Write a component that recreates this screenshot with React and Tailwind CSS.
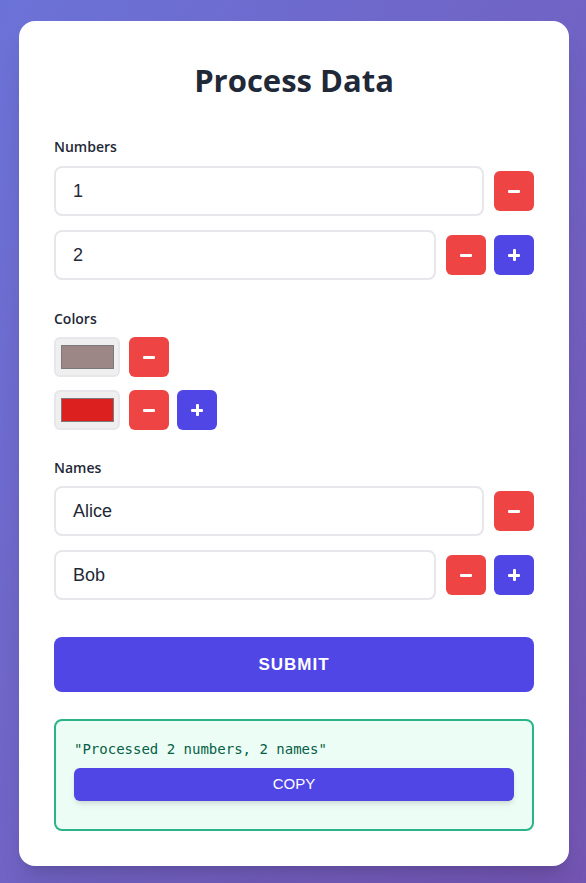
import React from "react";

const sans = { fontFamily: '"Open Sans", "Noto Sans", sans-serif' };
const arial = { fontFamily: '"Liberation Sans", Arial, sans-serif' };

function MinusBtn() {
  return (
    <button className="w-10 h-10 shrink-0 rounded-md bg-[#ef4444] flex items-center justify-center">
      <span className="block w-[12px] h-[3px] bg-white rounded-[1px]" />
    </button>
  );
}

function PlusBtn() {
  return (
    <button className="w-10 h-10 shrink-0 rounded-md bg-[#4f46e5] flex items-center justify-center relative">
      <span className="block w-[12px] h-[3px] bg-white rounded-[1px]" />
      <span className="absolute w-[3px] h-[12px] bg-white rounded-[1px]" />
    </button>
  );
}

function TextRow({ value, last }) {
  return (
    <div className="flex items-center gap-2.5">
      <div
        className="flex-1 h-[50px] rounded-lg border-2 border-[#e5e7eb] bg-white flex items-center pl-[17px] text-[18px] text-[#1f2937]"
        style={arial}
      >
        {value}
      </div>
      <div className="flex gap-2">
        <MinusBtn />
        {last && <PlusBtn />}
      </div>
    </div>
  );
}

function ColorRow({ color, last }) {
  return (
    <div className="flex items-center gap-[9px]">
      <div className="w-[66px] h-10 rounded-md border-2 border-[#e5e7eb] bg-[#efefef] flex items-center justify-center">
        <div className="w-[53px] h-[24px] border border-[#7a7a7a]" style={{ background: color }} />
      </div>
      <div className="flex gap-2">
        <MinusBtn />
        {last && <PlusBtn />}
      </div>
    </div>
  );
}

function Label({ children, mb = "mb-[9px]" }) {
  return (
    <div className={`text-[14px] font-semibold text-[#1f2937] leading-[20px] ${mb}`} style={sans}>
      {children}
    </div>
  );
}

export default function App() {
  return (
    <div className="min-h-[883px] bg-gradient-to-br from-[#6b72d7] to-[#7354b2] pt-[21px] pb-[18px] pl-[19px] pr-[17px]">
      <div className="bg-white rounded-2xl shadow-xl px-[35px] pt-[35px] pb-[35px]">
        <h1
          className="text-[31px] leading-[48px] font-bold text-[#1f2937] text-center mb-[33px]"
          style={sans}
        >
          Process Data
        </h1>

        <div className="mb-[29px]">
          <Label>Numbers</Label>
          <div className="flex flex-col gap-3.5">
            <TextRow value="1" />
            <TextRow value="2" last />
          </div>
        </div>

        <div className="mb-[28px]">
          <Label mb="mb-2">Colors</Label>
          <div className="flex flex-col gap-[13px]">
            <ColorRow color="#9c8686" />
            <ColorRow color="#dc1f1f" last />
          </div>
        </div>

        <div className="mb-[37px]">
          <Label mb="mb-2">Names</Label>
          <div className="flex flex-col gap-3.5">
            <TextRow value="Alice" />
            <TextRow value="Bob" last />
          </div>
        </div>

        <button
          className="w-full h-[55px] rounded-lg bg-[#4f46e5] text-white font-bold text-[17px] tracking-[1px] mb-[27px]"
          style={arial}
        >
          SUBMIT
        </button>

        <div className="rounded-lg border-2 border-[#2bb38a] bg-[#ecfdf5] px-[18px] pt-[18px] pb-[28px]">
          <div
            className="text-[14px] leading-[20px] text-[#065f46] mb-[9px]"
            style={{ fontFamily: '"DejaVu Sans Mono", "Liberation Mono", monospace' }}
          >
            "Processed 2 numbers, 2 names"
          </div>
          <button
            className="w-full h-[33px] rounded-md bg-[#4f46e5] text-white text-[15px] shadow-md"
            style={arial}
          >
            COPY
          </button>
        </div>
      </div>
    </div>
  );
}
